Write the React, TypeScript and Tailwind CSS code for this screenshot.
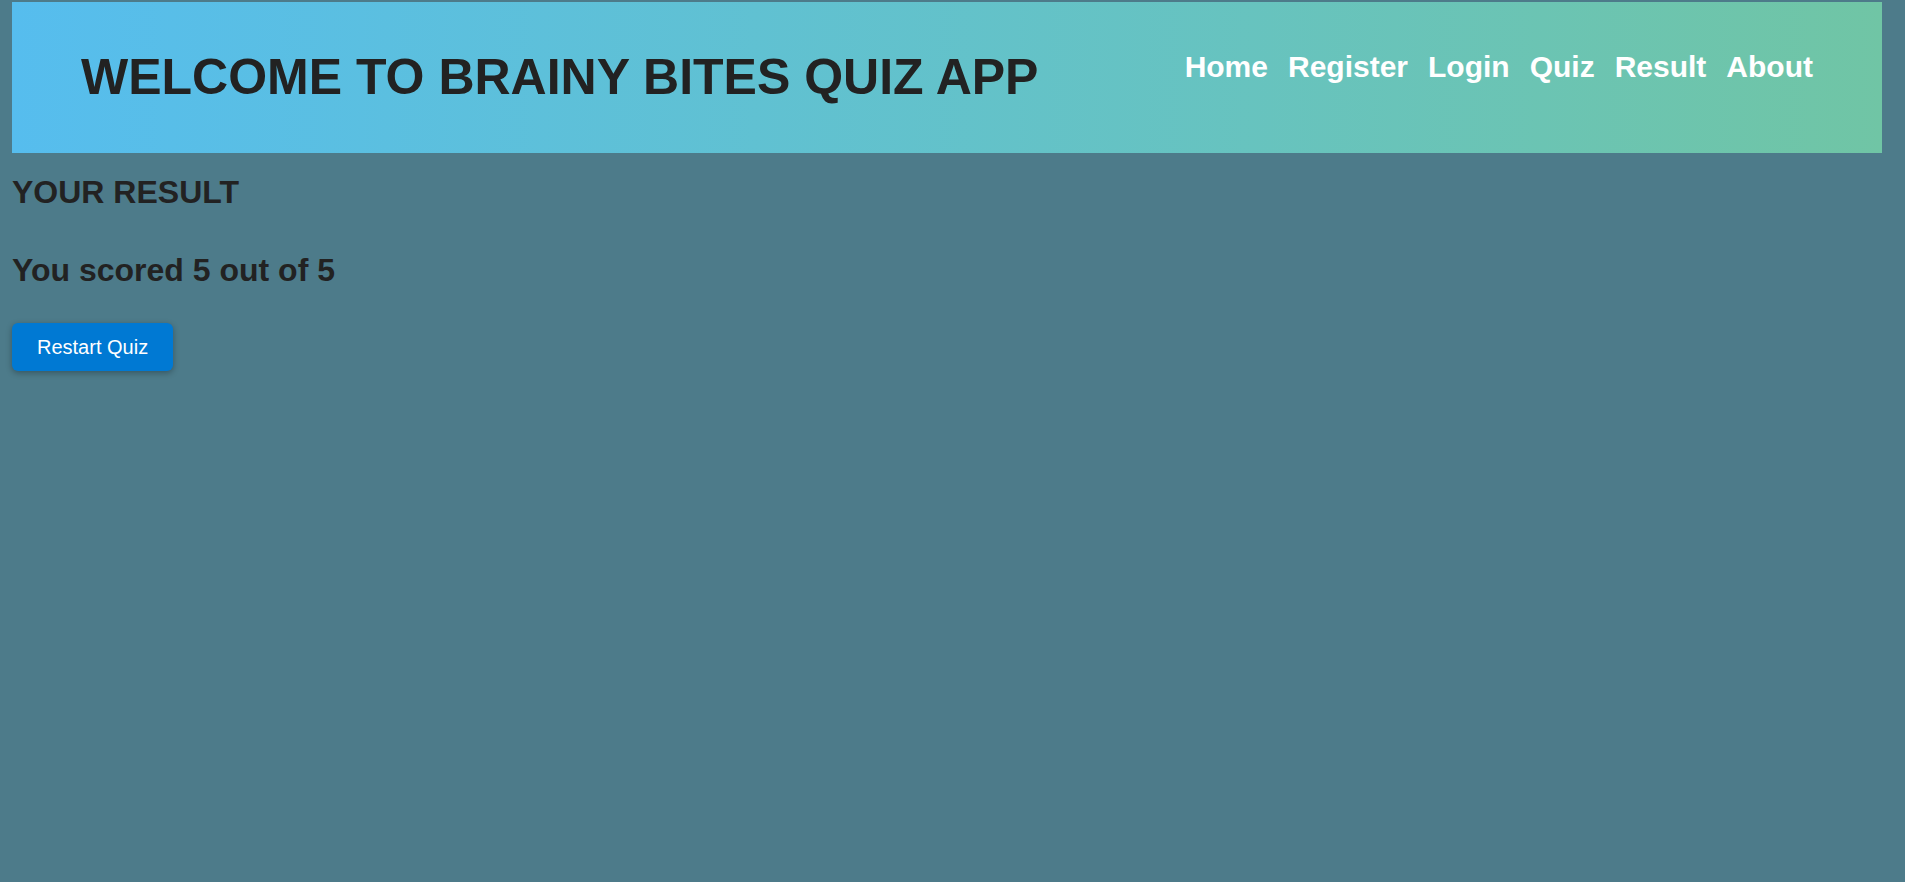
import React from "react";

export default function App() {
  const links = ["Home", "Register", "Login", "Quiz", "Result", "About"];
  return (
    <div className="min-h-screen w-full bg-[#4d7b8a] pt-[2px] pl-[12px] pr-[23px] font-['Liberation_Sans',Arial,sans-serif] text-[#222222]">
      <header className="flex h-[151px] w-full items-center justify-between bg-gradient-to-r from-[#56bdee] to-[#70c5a5] px-[69px]">
        <h1 className="text-[50px] font-bold leading-normal">WELCOME TO BRAINY BITES QUIZ APP</h1>
        <nav className="flex gap-[20px] pb-[23px]">
          {links.map((l) => (
            <a key={l} href="#" className="text-[30px] font-bold leading-normal text-white">
              {l}
            </a>
          ))}
        </nav>
      </header>
      <main>
        <h1 className="mt-[15px] text-[32px] font-bold leading-normal">YOUR RESULT</h1>
        <h2 className="mt-[30px] text-[32px] font-bold leading-normal">You scored 5 out of 5</h2>
        <button className="mt-[29px] h-[48px] rounded-[6px] bg-[#0079d3] px-[25px] text-[20px] leading-normal text-white shadow-[0_2px_6px_rgba(0,0,0,0.3)]">
          Restart Quiz
        </button>
      </main>
    </div>
  );
}
